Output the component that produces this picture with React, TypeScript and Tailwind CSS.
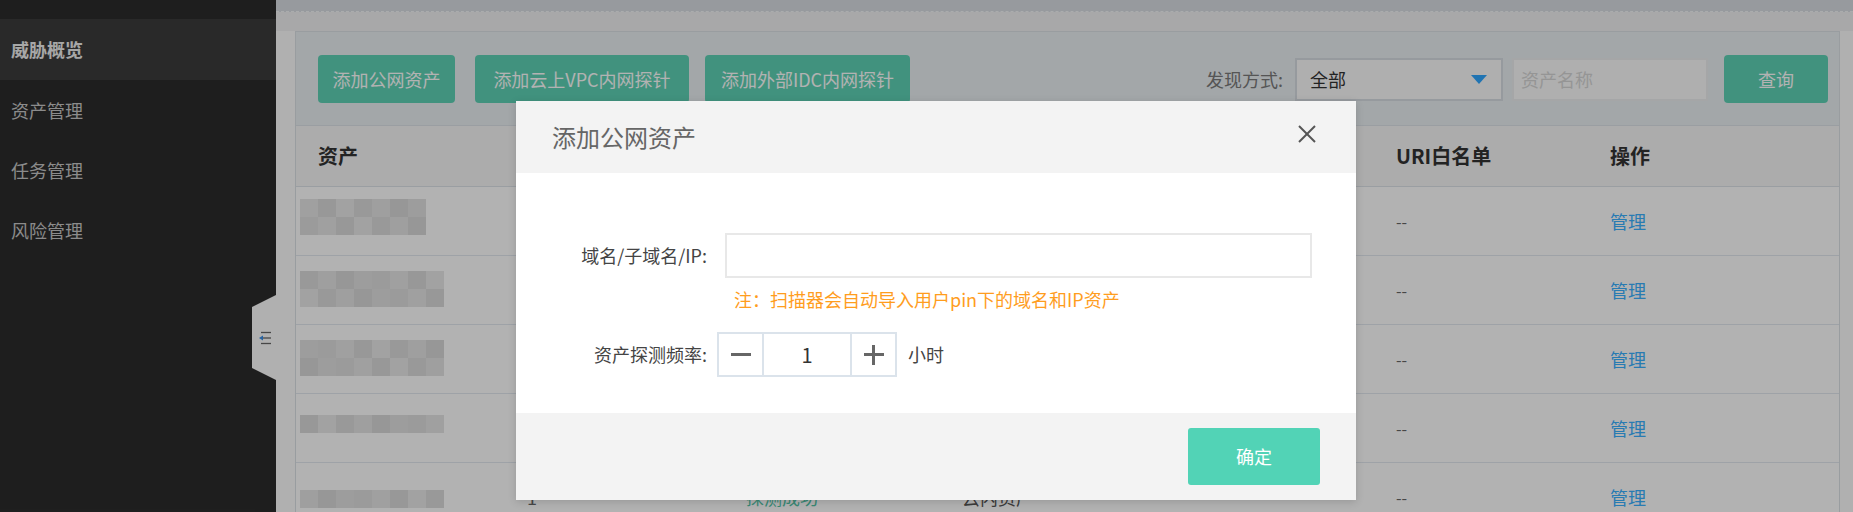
import React from "react";

const shades = [
  "bg-[#e6e6e6]",
  "bg-[#dcdcdc]",
  "bg-[#e1e1e1]",
  "bg-[#dadada]",
  "bg-[#e4e4e4]",
  "bg-[#dedede]",
  "bg-[#e9e9e9]",
  "bg-[#d9d9d9]",
];

function Mosaic({ lines, cols, offset = 0 }: { lines: number; cols: number; offset?: number }) {
  return (
    <div className="flex flex-col blur-[0.6px]">
      {Array.from({ length: lines }).map((_, r) => (
        <div key={r} className="flex">
          {Array.from({ length: cols }).map((__, c) => (
            <div key={c} className={`h-[18px] w-[18px] ${shades[(c * 3 + r * 5 + offset) % shades.length]}`} />
          ))}
        </div>
      ))}
    </div>
  );
}

const rows = [
  { lines: 2, cols: 7, mt: "mt-[-8px]" },
  { lines: 2, cols: 8, mt: "mt-[-2px]" },
  { lines: 2, cols: 8, mt: "mt-[-2px]" },
  { lines: 1, cols: 8, mt: "mt-[-8px]" },
  { lines: 1, cols: 8, mt: "mt-[4px]" },
];

function SidebarItem({ label, active }: { label: string; active?: boolean }) {
  return (
    <div
      className={
        active
          ? "h-[61px] flex items-center pl-[11px] bg-[#3c3c3c] text-[#f0f0f0] text-[18px] font-bold"
          : "h-[60px] flex items-center pl-[11px] text-[#c8c8c8] text-[18px]"
      }
    >
      {label}
    </div>
  );
}

export default function App() {
  return (
    <div className="relative w-[1853px] h-[512px] overflow-hidden flex font-['Noto_Sans_CJK_SC','Liberation_Sans',sans-serif] bg-white">
      {/* Sidebar */}
      <aside className="relative w-[276px] shrink-0 h-full bg-[#2c2c2c]">
        <div className="h-[19px]" />
        <SidebarItem label="威胁概览" active />
        <SidebarItem label="资产管理" />
        <SidebarItem label="任务管理" />
        <SidebarItem label="风险管理" />
        <div className="absolute right-0 top-[295px] w-[24px] h-[85px]">
          <svg width="24" height="85" viewBox="0 0 24 85" className="absolute inset-0">
            <polygon points="24,0 0,12 0,73 24,85" fill="#fdfdfd" />
          </svg>
          <svg width="16" height="16" viewBox="0 0 16 16" className="absolute left-[5px] top-[35px]">
            <line x1="4" y1="2.5" x2="14" y2="2.5" stroke="#666" strokeWidth="1.3" />
            <line x1="6" y1="8" x2="14" y2="8" stroke="#666" strokeWidth="1.3" />
            <polygon points="2,8 6,5.5 6,10.5" fill="#3a8ee6" />
            <line x1="4" y1="13.5" x2="14" y2="13.5" stroke="#666" strokeWidth="1.3" />
          </svg>
        </div>
      </aside>

      {/* Main */}
      <main className="flex-1 flex flex-col bg-[#fdfdfd] min-w-0">
        <div className="h-[12px] shrink-0 bg-[#d8dde3] border-b border-dashed border-[#f4f6f8]" />
        <div className="h-[19px] shrink-0 bg-[#f1f1f3]" />
        <section className="ml-[19px] mr-[13px] border border-[#dce1e6] bg-white flex-1">
          {/* toolbar */}
          <div className="flex items-center bg-[#eaeff3] pl-[22px] pr-[11px] pt-[23px] pb-[22px]">
            <button className="w-[137px] h-[48px] rounded-[4px] bg-[#5ed2b5] text-white text-[18px] flex items-center justify-center">
              添加公网资产
            </button>
            <button className="ml-[20px] w-[214px] h-[48px] rounded-[4px] bg-[#5ed2b5] text-white text-[18px] flex items-center justify-center">
              添加云上VPC内网探针
            </button>
            <button className="ml-[16px] w-[205px] h-[48px] rounded-[4px] bg-[#5ed2b5] text-white text-[18px] flex items-center justify-center">
              添加外部IDC内网探针
            </button>
            <div className="ml-auto flex items-center">
              <span className="text-[18px] text-[#7a7a7a]">发现方式:</span>
              <div className="ml-[12px] w-[208px] h-[43px] border-2 border-[#d7dde3] bg-[#fbfbfb] flex items-center justify-between pl-[13px] pr-[14px]">
                <span className="text-[18px] text-[#333]">全部</span>
                <svg width="16" height="9" viewBox="0 0 16 9">
                  <polygon points="0,0 16,0 8,9" fill="#2fa6ff" />
                </svg>
              </div>
              <div className="ml-[9px] w-[196px] h-[43px] border-2 border-[#eceef0] bg-[#fbfbfb] flex items-center pl-[7px]">
                <span className="text-[18px] text-[#d6d6d6]">资产名称</span>
              </div>
              <button className="ml-[16px] w-[104px] h-[48px] rounded-[4px] bg-[#5ed2b5] text-white text-[18px] flex items-center justify-center">
                查询
              </button>
            </div>
          </div>

          {/* table header */}
          <div className="flex items-center h-[62px] bg-[#f6f6f6] border-t border-b border-[#dde2e8] pl-[22px] text-[20px] font-bold text-[#333]">
            <div className="w-[1078px]">资产</div>
            <div className="w-[214px]">URI白名单</div>
            <div className="flex-1">操作</div>
          </div>

          {rows.map((r, i) => {
            const last = i === rows.length - 1;
            return (
              <div key={i} className="flex items-center h-[69px] border-b border-[#e3e9f0] pl-[22px] text-[18px] text-[#333]">
                <div className="w-[209px] flex items-center">
                  <div className={`${r.mt} -translate-x-[18px]`}>
                    <Mosaic lines={r.lines} cols={r.cols} offset={i} />
                  </div>
                </div>
                <div className="w-[219px] text-[#666]">{last ? "1" : ""}</div>
                <div className="w-[216px] text-[#52c4a8]">{last ? "探测成功" : ""}</div>
                <div className="w-[434px] text-[#555]">{last ? "云内资产" : ""}</div>
                <div className="w-[214px] text-[16px] text-[#666]">--</div>
                <div className="flex-1 text-[#3ab0ff]">管理</div>
              </div>
            );
          })}
        </section>
      </main>

      {/* Overlay */}
      <div className="absolute inset-0 bg-black/30 z-10" />

      {/* Modal */}
      <div className="absolute z-20 left-[516px] top-[101px] w-[840px] bg-white shadow-[0_2px_8px_rgba(0,0,0,0.15)]">
        <div className="h-[72px] bg-[#f3f3f3] flex items-center justify-between pl-[36px] pr-[39px]">
          <span className="text-[24px] text-[#666]">添加公网资产</span>
          <svg width="20" height="20" viewBox="0 0 20 20" className="mt-[-6px]">
            <line x1="2" y1="2" x2="18" y2="18" stroke="#555" strokeWidth="2" />
            <line x1="18" y1="2" x2="2" y2="18" stroke="#555" strokeWidth="2" />
          </svg>
        </div>
        <div className="h-[240px] pt-[60px]">
          <div className="flex items-center h-[45px]">
            <div className="w-[191px] text-right text-[18px] text-[#444]">域名/子域名/IP:</div>
            <div className="ml-[18px] w-[587px] h-[45px] border-2 border-[#e8e8e8] bg-white" />
          </div>
          <div className="mt-[12px] pl-[218px] text-[18px] leading-[18px] text-[#ff9d1e]">
            注：扫描器会自动导入用户pin下的域名和IP资产
          </div>
          <div className="mt-[24px] flex items-center h-[45px]">
            <div className="w-[191px] text-right text-[18px] text-[#444]">资产探测频率:</div>
            <div className="ml-[10px] w-[180px] h-[45px] border-2 border-[#dbe3eb] flex">
              <div className="w-[45px] h-full border-r-2 border-[#dbe3eb] flex items-center justify-center">
                <div className="w-[20px] h-[3px] bg-[#666]" />
              </div>
              <div className="flex-1 h-full flex items-center justify-center text-[20px] text-[#333]">1</div>
              <div className="w-[45px] h-full border-l-2 border-[#dbe3eb] flex items-center justify-center relative">
                <div className="w-[20px] h-[3px] bg-[#666]" />
                <div className="absolute w-[3px] h-[20px] bg-[#666]" />
              </div>
            </div>
            <span className="ml-[11px] text-[18px] text-[#444]">小时</span>
          </div>
        </div>
        <div className="h-[87px] bg-[#f3f3f3] flex items-center justify-end pr-[36px]">
          <button className="w-[132px] h-[57px] rounded-[3px] bg-[#52d3b6] text-white text-[18px] flex items-center justify-center">
            确定
          </button>
        </div>
      </div>
    </div>
  );
}
